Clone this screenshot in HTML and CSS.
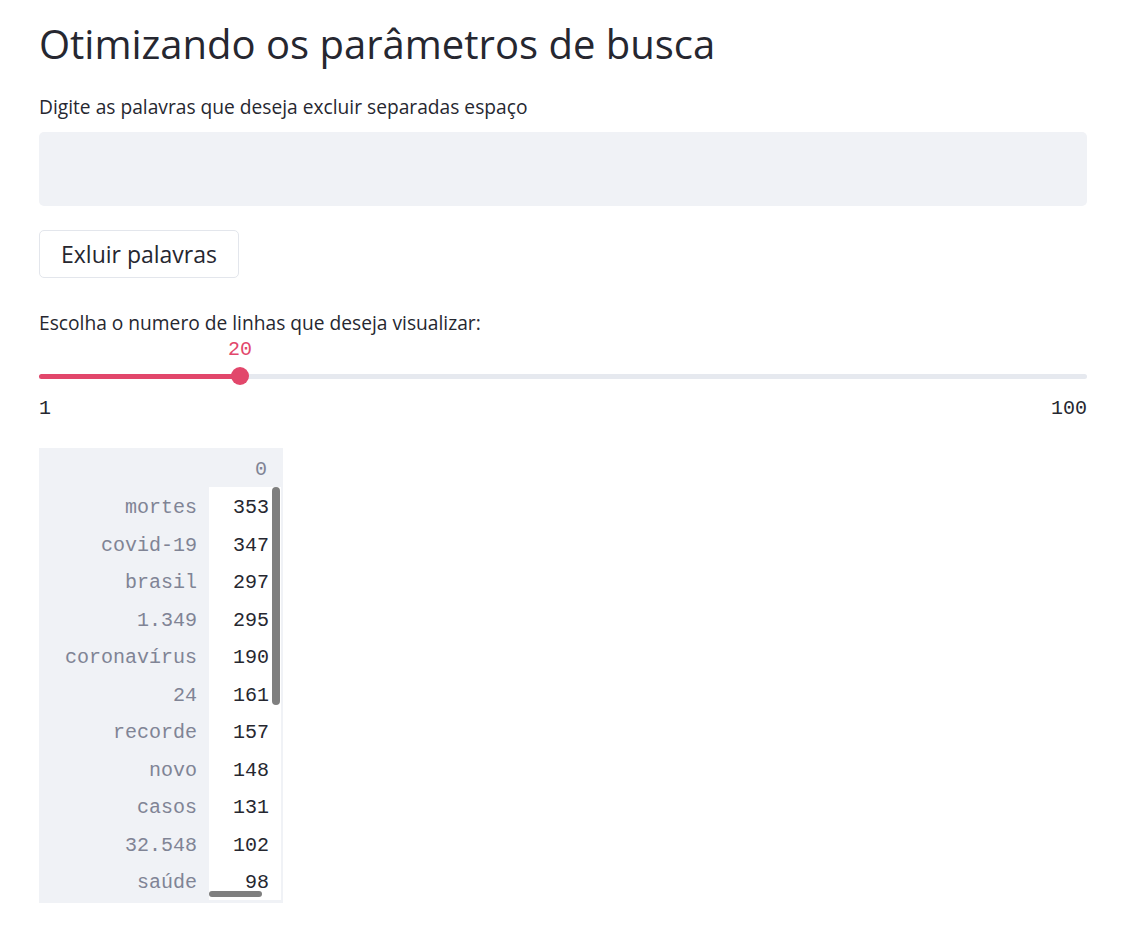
FILE: index.html
```html
<!DOCTYPE html>
<html lang="pt">
<head>
<meta charset="utf-8">
<title>Otimizando os parâmetros de busca</title>
<link rel="stylesheet" href="styles.css">
</head>
<body>
<main class="app">
  <h1 class="title">Otimizando os parâmetros de busca</h1>

  <label class="label label-input">Digite as palavras que deseja excluir separadas espaço</label>
  <div class="textbox"></div>

  <button class="btn">Exluir palavras</button>

  <div class="slider-block">
    <label class="label">Escolha o numero de linhas que deseja visualizar:</label>
    <div class="slider">
      <div class="track">
        <div class="fill" style="width: 19.19%"></div>
        <div class="thumb" style="left: 19.19%">
          <span class="thumb-value">20</span>
        </div>
      </div>
    </div>
    <div class="ticks"><span>1</span><span>100</span></div>
  </div>

  <div class="table">
    <div class="head-row"><span class="idx"></span><span class="val head">0</span></div>
    <div class="body">
      <div class="row"><span class="idx">mortes</span><span class="val">353</span></div>
      <div class="row"><span class="idx">covid-19</span><span class="val">347</span></div>
      <div class="row"><span class="idx">brasil</span><span class="val">297</span></div>
      <div class="row"><span class="idx">1.349</span><span class="val">295</span></div>
      <div class="row"><span class="idx">coronavírus</span><span class="val">190</span></div>
      <div class="row"><span class="idx">24</span><span class="val">161</span></div>
      <div class="row"><span class="idx">recorde</span><span class="val">157</span></div>
      <div class="row"><span class="idx">novo</span><span class="val">148</span></div>
      <div class="row"><span class="idx">casos</span><span class="val">131</span></div>
      <div class="row"><span class="idx">32.548</span><span class="val">102</span></div>
      <div class="row"><span class="idx">saúde</span><span class="val">98</span></div>
      <div class="vscroll"></div>
      <div class="hscroll"></div>
    </div>
  </div>
</main>
</body>
</html>
```

FILE: styles.css
```css
* { box-sizing: border-box; }

html, body {
  margin: 0;
  padding: 0;
  background: #ffffff;
}

body {
  font-family: "Open Sans", "Noto Sans", sans-serif;
  color: #262730;
}

.app {
  width: 1048px;
  margin-left: 39px;
  padding-top: 16px;
  display: flex;
  flex-direction: column;
  align-items: flex-start;
}

.title {
  font-family: "Open Sans", sans-serif;
  font-weight: 400;
  font-size: 40px;
  line-height: 56px;
  margin: 0;
  letter-spacing: 0;
}

.label {
  font-size: 19.2px;
  line-height: 24px;
  color: #262730;
}

.label-input {
  margin-top: 23px;
}

.textbox {
  margin-top: 13px;
  width: 100%;
  height: 74px;
  background: #f0f2f6;
  border-radius: 5px;
}

.btn {
  margin-top: 24px;
  width: 200px;
  height: 48px;
  background: #ffffff;
  border: 1.5px solid #e3e6ec;
  border-radius: 5px;
  font-family: "Open Sans", sans-serif;
  font-size: 23px;
  color: #262730;
  padding: 0;
}

.slider-block {
  margin-top: 33px;
  width: 100%;
}

.slider {
  margin-top: 34px;
  height: 14px;
  display: flex;
  align-items: center;
}

.track {
  position: relative;
  width: 100%;
  height: 5px;
  border-radius: 3px;
  background: #e6e9ef;
}

.fill {
  height: 100%;
  border-radius: 3px;
  background: #e2476b;
}

.thumb {
  position: absolute;
  top: 50%;
  width: 18px;
  height: 18px;
  margin-left: -9px;
  margin-top: -9px;
  border-radius: 50%;
  background: #e2476b;
}

.thumb-value {
  position: absolute;
  bottom: 25px;
  left: 50%;
  transform: translateX(-50%);
  font-family: "Liberation Mono", "DejaVu Sans Mono", monospace;
  font-size: 20px;
  line-height: 20px;
  color: #e2476b;
}

.ticks {
  margin-top: 14px;
  display: flex;
  justify-content: space-between;
  font-family: "Liberation Mono", "DejaVu Sans Mono", monospace;
  font-size: 20px;
  line-height: 24px;
  color: #262730;
}

.table {
  margin-top: 27px;
  width: 244px;
  background: #f0f2f6;
  padding: 0 2px 3px 0;
  font-family: "Liberation Mono", "DejaVu Sans Mono", monospace;
  font-size: 20px;
}

.head-row, .row {
  display: grid;
  grid-template-columns: 170px 72px;
}

.head-row {
  height: 39px;
}

.body {
  position: relative;
  overflow: hidden;
}

.row {
  height: 37.5px;
}

.idx, .val {
  height: 100%;
  padding-top: 4px;
  padding-right: 12px;
  display: flex;
  align-items: center;
  justify-content: flex-end;
}

.idx {
  color: #808495;
}

.val {
  color: #262730;
  background: #ffffff;
}

.val.head {
  background: transparent;
  color: #808495;
  padding-right: 14px;
}

.vscroll {
  position: absolute;
  left: 233px;
  top: 0;
  width: 8px;
  height: 218px;
  border-radius: 4px;
  background: #7f7f7f;
}

.hscroll {
  position: absolute;
  left: 170px;
  bottom: 3px;
  width: 53px;
  height: 6px;
  border-radius: 3px;
  background: #7f7f7f;
}
```
